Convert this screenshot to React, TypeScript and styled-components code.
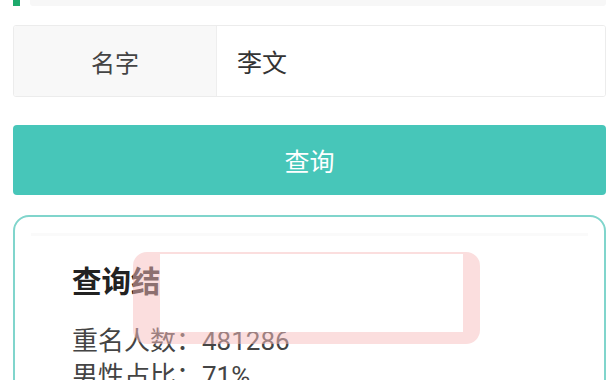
import styled, { createGlobalStyle } from "styled-components";

const GlobalStyle = createGlobalStyle`
  html, body {
    margin: 0;
    padding: 0;
    background: #ffffff;
    font-family: Roboto, "Noto Sans CJK SC", sans-serif;
    overflow: hidden;
  }
`;

const Page = styled.div`
  padding: 0 10px 0 13px;
  height: 380px;
  overflow: hidden;
`;

const Progress = styled.div`
  display: flex;
  align-items: stretch;
  gap: 10px;
  height: 6px;
`;

const ProgressMark = styled.div`
  width: 7px;
  background: #1daa6c;
`;

const ProgressTrack = styled.div`
  flex: 1;
  background: #f7f7f7;
  border-radius: 0 0 3px 3px;
`;

const FieldRow = styled.div`
  display: flex;
  margin-top: 19px;
  height: 70px;
  border: 1px solid #ececec;
  border-radius: 3px;
  overflow: hidden;
`;

const FieldLabel = styled.div`
  width: 202px;
  display: flex;
  align-items: center;
  justify-content: center;
  background: #f8f8f8;
  border-right: 1px solid #eeeeee;
  font-size: 24px;
  color: #444;
`;

const FieldInput = styled.input`
  flex: 1;
  border: none;
  outline: none;
  padding: 0 0 0 20px;
  font-family: Roboto, "Noto Sans CJK SC", sans-serif;
  font-size: 25px;
  color: #333;
  background: #fff;
`;

const QueryButton = styled.button`
  display: block;
  width: 100%;
  margin-top: 28px;
  height: 70px;
  border: none;
  border-radius: 4px;
  background: #47c6b9;
  color: #ffffff;
  font-family: Roboto, "Noto Sans CJK SC", sans-serif;
  font-size: 25px;
  cursor: pointer;
`;

const ResultCard = styled.div`
  position: relative;
  margin-top: 20px;
  height: 220px;
  border: 2px solid #80d5cc;
  border-radius: 16px;
  padding: 45px 0 0 57px;
`;

const CardStrip = styled.div`
  position: absolute;
  top: 16px;
  left: 16px;
  right: 16px;
  height: 3px;
  background: #fafafa;
`;

const ResultTitle = styled.h2`
  margin: 0;
  font-size: 29.5px;
  line-height: 40px;
  font-weight: 700;
  color: #222;
`;

const ResultList = styled.div`
  margin-top: 22px;
  display: flex;
  flex-direction: column;
`;

const ResultLine = styled.div`
  font-size: 26px;
  line-height: 35px;
  color: #444;
`;

const Highlight = styled.div`
  position: absolute;
  top: 35px;
  left: 118px;
  width: 347px;
  height: 92px;
  border-radius: 14px;
  background: rgba(248, 190, 190, 0.5);
  box-sizing: border-box;
  padding: 2px 17px 12px 27px;
  display: flex;
`;

const HighlightInner = styled.div`
  flex: 1;
  background: #ffffff;
`;

export default function App() {
  return (
    <>
      <GlobalStyle />
      <Page>
        <Progress>
          <ProgressMark />
          <ProgressTrack />
        </Progress>
        <FieldRow>
          <FieldLabel>名字</FieldLabel>
          <FieldInput defaultValue="李文" />
        </FieldRow>
        <QueryButton>查询</QueryButton>
        <ResultCard>
          <CardStrip />
          <ResultTitle>查询结果</ResultTitle>
          <ResultList>
            <ResultLine>重名人数：481286</ResultLine>
            <ResultLine>男性占比：71%</ResultLine>
          </ResultList>
          <Highlight>
            <HighlightInner />
          </Highlight>
        </ResultCard>
      </Page>
    </>
  );
}
